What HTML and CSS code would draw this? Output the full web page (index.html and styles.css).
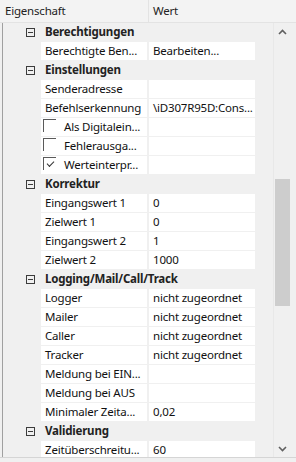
FILE: index.html
```html
<!DOCTYPE html>
<html>
<head>
<meta charset="utf-8">
<link rel="stylesheet" href="styles.css">
</head>
<body>
<div class="grid">
  <div class="header">
    <div class="hname">Eigenschaft</div>
    <div class="hval">Wert</div>
  </div>
  <div class="main">
    <div class="rows">
      <div class="row cat"><span class="exp"></span><span class="clabel">Berechtigungen</span></div>
      <div class="row prop"><div class="name">Berechtigte Ben...</div><div class="val">Bearbeiten...</div></div>
      <div class="row cat"><span class="exp"></span><span class="clabel">Einstellungen</span></div>
      <div class="row prop"><div class="name">Senderadresse</div><div class="val"></div></div>
      <div class="row prop"><div class="name">Befehlserkennung</div><div class="val">\iD307R95D:Cons...</div></div>
      <div class="row prop"><div class="name chk"><span class="box"></span>Als Digitalein...</div><div class="val"></div></div>
      <div class="row prop"><div class="name chk"><span class="box"></span>Fehlerausga...</div><div class="val"></div></div>
      <div class="row prop"><div class="name chk"><span class="box checked"></span>Werteinterpr...</div><div class="val"></div></div>
      <div class="row cat"><span class="exp"></span><span class="clabel">Korrektur</span></div>
      <div class="row prop"><div class="name">Eingangswert 1</div><div class="val">0</div></div>
      <div class="row prop"><div class="name">Zielwert 1</div><div class="val">0</div></div>
      <div class="row prop"><div class="name">Eingangswert 2</div><div class="val">1</div></div>
      <div class="row prop"><div class="name">Zielwert 2</div><div class="val">1000</div></div>
      <div class="row cat"><span class="exp"></span><span class="clabel">Logging/Mail/Call/Track</span></div>
      <div class="row prop"><div class="name">Logger</div><div class="val">nicht zugeordnet</div></div>
      <div class="row prop"><div class="name">Mailer</div><div class="val">nicht zugeordnet</div></div>
      <div class="row prop"><div class="name">Caller</div><div class="val">nicht zugeordnet</div></div>
      <div class="row prop"><div class="name">Tracker</div><div class="val">nicht zugeordnet</div></div>
      <div class="row prop"><div class="name">Meldung bei EIN...</div><div class="val"></div></div>
      <div class="row prop"><div class="name">Meldung bei AUS</div><div class="val"></div></div>
      <div class="row prop"><div class="name">Minimaler Zeita...</div><div class="val">0,02</div></div>
      <div class="row cat"><span class="exp"></span><span class="clabel">Validierung</span></div>
      <div class="row prop"><div class="name">Zeitüberschreitu...</div><div class="val">60</div></div>
    </div>
    <div class="scrollbar">
      <div class="arrow">
        <svg width="9" height="6" viewBox="0 0 9 6"><polyline points="1,5 4.5,1.5 8,5" fill="none" stroke="#606060" stroke-width="1.6"/></svg>
      </div>
      <div class="track"><div class="thumb"></div></div>
      <div class="arrow">
        <svg width="9" height="6" viewBox="0 0 9 6"><polyline points="1,1 4.5,4.5 8,1" fill="none" stroke="#606060" stroke-width="1.6"/></svg>
      </div>
    </div>
  </div>
  <div class="footer"></div>
</div>
</body>
</html>
```

FILE: styles.css
```css
html, body {
  margin: 0;
  padding: 0;
}
body {
  width: 296px;
  height: 462px;
  overflow: hidden;
  background: #f0f0f0;
  font-family: "Noto Sans", "Open Sans", sans-serif;
  font-size: 11.5px;
  letter-spacing: -0.2px;
  color: #111;
}
.grid {
  display: flex;
  flex-direction: column;
  height: 462px;
}
.header {
  height: 22px;
  flex: none;
  display: flex;
  background: #f3f3f3;
  border-bottom: 1px solid #e3e3e3;
  line-height: 22px;
  color: #222;
}
.hname {
  width: 143px;
  padding-left: 5px;
  border-right: 1px solid #e3e3e3;
}
.hval {
  padding-left: 4px;
}
.main {
  height: 434px;
  flex: none;
  display: flex;
  padding-left: 2px;
  overflow: hidden;
}
.rows {
  width: 270px;
  border-left: 1px solid #a0a0a0;
  overflow: hidden;
}
.row {
  height: 18px;
  margin-bottom: 1px;
  line-height: 18px;
  white-space: nowrap;
}
.cat {
  display: flex;
  align-items: center;
}
.exp {
  width: 7px;
  height: 7px;
  border: 1px solid #3c3c3c;
  margin-left: 23px;
  margin-right: 10px;
  position: relative;
  flex: none;
}
.exp::after {
  content: "";
  position: absolute;
  left: 1px;
  right: 1px;
  top: 3px;
  height: 1px;
  background: #3c3c3c;
}
.clabel {
  font-weight: bold;
  color: #222;
}
.prop {
  display: flex;
  padding-left: 38px;
}
.name {
  width: 102px;
  padding-left: 4px;
  background: #fff;
  overflow: hidden;
}
.val {
  width: 102px;
  margin-left: 2px;
  padding-left: 4px;
  background: #fff;
  overflow: hidden;
}
.chk {
  display: flex;
  align-items: flex-start;
  padding-left: 2px;
  width: 104px;
}
.box {
  width: 13px;
  height: 13px;
  margin-top: 1px;
  margin-right: 8px;
  flex: none;
  border-left: 1px solid #5a5a5a;
  border-top: 1px solid #5a5a5a;
  box-sizing: border-box;
  position: relative;
}
.box.checked::after {
  content: "";
  position: absolute;
  left: 3px;
  top: 3px;
  width: 6px;
  height: 3px;
  border-left: 1px solid #333;
  border-bottom: 1px solid #333;
  transform: rotate(-45deg);
}
.scrollbar {
  width: 17px;
  display: flex;
  flex-direction: column;
  background: #f0f0f0;
  border-left: 1px solid #e8e8e8;
}
.arrow {
  height: 17px;
  display: flex;
  align-items: center;
  justify-content: center;
  flex: none;
}
.track {
  flex: 1;
  padding-top: 139px;
}
.thumb {
  margin: 0 1px;
  height: 127px;
  background: #cdcdcd;
}
.footer {
  flex: 1;
  border-top: 1px solid #d5d5d5;
  background: #f0f0f0;
}
```
